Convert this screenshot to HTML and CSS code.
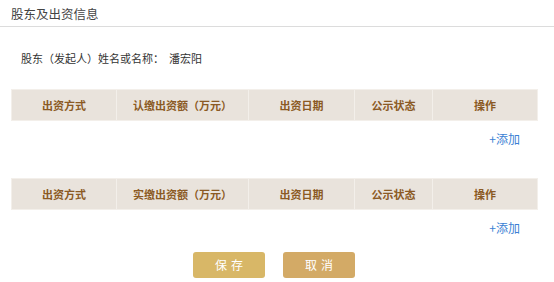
FILE: index.html
```html
<!DOCTYPE html>
<html>
<head>
    <meta charset="utf-8"/>
    <title>股东及出资信息</title>
    <link rel="stylesheet" href="styles.css">
</head>
<body>
<div class="title">股东及出资信息</div>
<div class="wrap">
    <p class="holder">股东（发起人）姓名或名称：<span class="name">潘宏阳</span></p>
    <table class="grid">
        <tr>
            <th class="c1">出资方式</th>
            <th class="c2">认缴出资额（万元）</th>
            <th class="c3">出资日期</th>
            <th class="c4">公示状态</th>
            <th class="c5">操作</th>
        </tr>
    </table>
    <p class="add"><a href="javascript:;">+添加</a></p>
    <table class="grid grid2">
        <tr>
            <th class="c1">出资方式</th>
            <th class="c2">实缴出资额（万元）</th>
            <th class="c3">出资日期</th>
            <th class="c4">公示状态</th>
            <th class="c5">操作</th>
        </tr>
    </table>
    <p class="add"><a href="javascript:;">+添加</a></p>
    <div class="btns">
        <span class="btn save">保存</span>
        <span class="btn cancel">取消</span>
    </div>
</div>
</body>
</html>
```

FILE: styles.css
```css
* {
    margin: 0;
    padding: 0;
    font-family: "Microsoft YaHei", "Noto Sans CJK SC", sans-serif;
}

a {
    text-decoration: none;
    color: inherit;
}
body{
    background: #fff;
    color: #333;
}
.title{
    height: 22px;
    padding: 4px 11px 0;
    line-height: 20px;
    font-size: 12.5px;
    color: #444;
    border-bottom: 1px solid #dcdcdc;
}
.wrap{
    width: 526px;
    padding: 0 11px;
}
.holder{
    margin-top: 21px;
    padding-left: 10px;
    height: 20px;
    line-height: 20px;
    font-size: 11px;
    color: #333;
}
.holder .name{
    margin-left: 5px;
}
.grid{
    width: 526px;
    margin-top: 21px;
    border-collapse: collapse;
    table-layout: fixed;
}
.grid2{
    margin-top: 29px;
}
.grid th{
    height: 30px;
    font-size: 11px;
    font-weight: bold;
    color: #8b5a24;
    background: #e9e3dc;
    border: 1px solid #f3efea;
    text-align: center;
}
.grid .c1{ width: 104px; }
.grid .c2{ width: 131px; }
.grid .c3{ width: 105px; }
.grid .c4{ width: 77px; }
.grid .c5{ width: 104px; }
.add{
    margin-top: 8px;
    padding-right: 17px;
    height: 20px;
    line-height: 20px;
    font-size: 12px;
    text-align: right;
    color: #3b7fd4;
}
.btns{
    display: flex;
    justify-content: center;
    gap: 18px;
    margin-top: 14px;
}
.btn{
    display: inline-block;
    width: 72px;
    height: 26px;
    line-height: 26px;
    border-radius: 3px;
    font-size: 12px;
    color: #fff;
    text-align: center;
    letter-spacing: 4px;
    text-indent: 4px;
}
.save{
    background: #d8b767;
}
.cancel{
    background: #d3aa66;
}
```
